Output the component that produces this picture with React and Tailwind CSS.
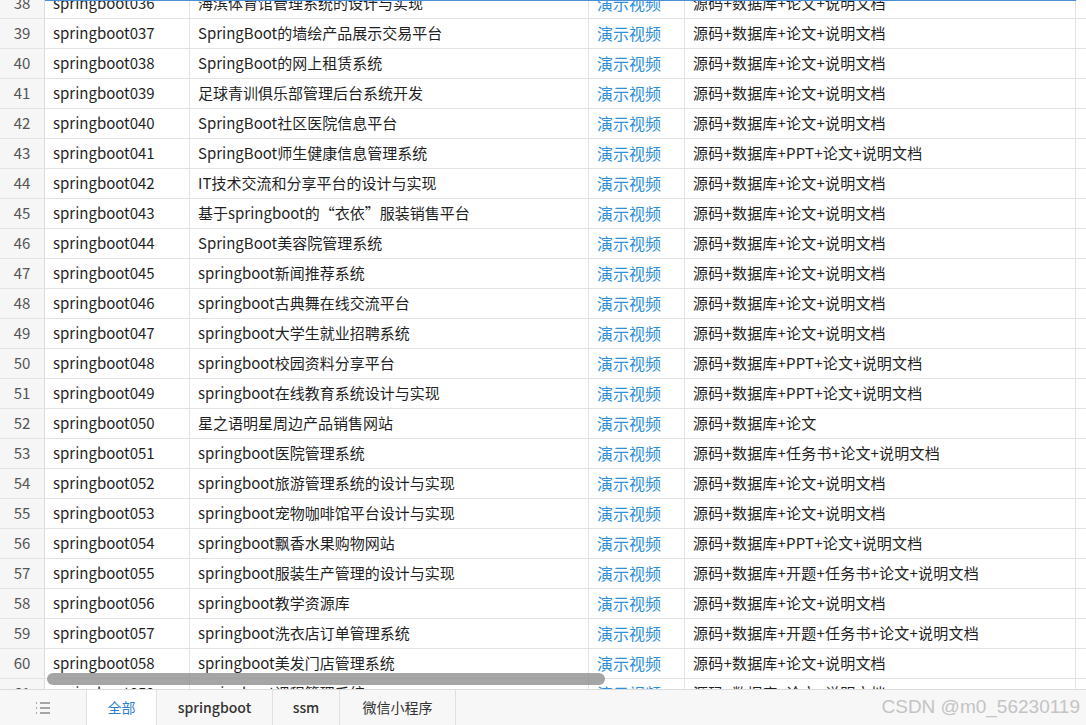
const rows = [
  [38, "springboot036", "海滨体育馆管理系统的设计与实现", "源码+数据库+论文+说明文档"],
  [39, "springboot037", "SpringBoot的墙绘产品展示交易平台", "源码+数据库+论文+说明文档"],
  [40, "springboot038", "SpringBoot的网上租赁系统", "源码+数据库+论文+说明文档"],
  [41, "springboot039", "足球青训俱乐部管理后台系统开发", "源码+数据库+论文+说明文档"],
  [42, "springboot040", "SpringBoot社区医院信息平台", "源码+数据库+论文+说明文档"],
  [43, "springboot041", "SpringBoot师生健康信息管理系统", "源码+数据库+PPT+论文+说明文档"],
  [44, "springboot042", "IT技术交流和分享平台的设计与实现", "源码+数据库+论文+说明文档"],
  [45, "springboot043", "基于springboot的“衣依”服装销售平台", "源码+数据库+论文+说明文档"],
  [46, "springboot044", "SpringBoot美容院管理系统", "源码+数据库+论文+说明文档"],
  [47, "springboot045", "springboot新闻推荐系统", "源码+数据库+论文+说明文档"],
  [48, "springboot046", "springboot古典舞在线交流平台", "源码+数据库+论文+说明文档"],
  [49, "springboot047", "springboot大学生就业招聘系统", "源码+数据库+论文+说明文档"],
  [50, "springboot048", "springboot校园资料分享平台", "源码+数据库+PPT+论文+说明文档"],
  [51, "springboot049", "springboot在线教育系统设计与实现", "源码+数据库+PPT+论文+说明文档"],
  [52, "springboot050", "星之语明星周边产品销售网站", "源码+数据库+论文"],
  [53, "springboot051", "springboot医院管理系统", "源码+数据库+任务书+论文+说明文档"],
  [54, "springboot052", "springboot旅游管理系统的设计与实现", "源码+数据库+论文+说明文档"],
  [55, "springboot053", "springboot宠物咖啡馆平台设计与实现", "源码+数据库+论文+说明文档"],
  [56, "springboot054", "springboot飘香水果购物网站", "源码+数据库+PPT+论文+说明文档"],
  [57, "springboot055", "springboot服装生产管理的设计与实现", "源码+数据库+开题+任务书+论文+说明文档"],
  [58, "springboot056", "springboot教学资源库", "源码+数据库+论文+说明文档"],
  [59, "springboot057", "springboot洗衣店订单管理系统", "源码+数据库+开题+任务书+论文+说明文档"],
  [60, "springboot058", "springboot美发门店管理系统", "源码+数据库+论文+说明文档"],
  [61, "springboot059", "springboot课程管理系统", "源码+数据库+论文+说明文档"],
];

export default function App() {
  return (
    <div className="w-[1086px] h-[725px] overflow-hidden bg-white text-[15px] text-[#1f1f1f]" style={{ fontFamily: '"Noto Sans CJK SC", "Noto Sans", sans-serif' }}>
      <div className="relative h-[689px] overflow-hidden">
        <div className="-mt-[11px]">
          {rows.map(([n, id, name, files]) => (
            <div key={n} className="flex h-[30px] border-b border-[#e3e3e3]">
              <div className="w-[45px] shrink-0 bg-[#f6f6f6] border-r border-[#dcdcdc] flex items-center justify-center text-[#555]">{n}</div>
              <div className="w-[145px] shrink-0 border-r border-[#e3e3e3] flex items-center px-2">{id}</div>
              <div className="w-[399px] shrink-0 border-r border-[#e3e3e3] flex items-center px-2">{name}</div>
              <div className="w-[96px] shrink-0 border-r border-[#e3e3e3] flex items-center px-2 pb-[2px] text-[16px] text-[#2f8fdc]">演示视频</div>
              <div className="w-[391px] shrink-0 border-r border-[#e3e3e3] flex items-center px-2 tracking-[0.2px]">{files}</div>
            </div>
          ))}
        </div>
        <div className="absolute top-0 left-[45px] right-[10px] h-px bg-[#4a90d9]" />
        <div className="absolute left-[47px] top-[673px] w-[558px] h-[12px] rounded-full bg-[#8f8f8f]/80" />
      </div>
      <div className="flex h-[36px] bg-[#f7f7f7] border-t border-[#dcdcdc] items-center text-[14px]">
        <div className="w-[87px] h-full border-r border-[#e0e0e0] flex items-center justify-center text-[#555]">
          <svg width="16" height="14" viewBox="0 0 16 14" fill="none" stroke="#555" strokeWidth="1.2">
            <path d="M1 2h1M1 7h1M1 12h1M5 2h10M5 7h10M5 12h10" />
          </svg>
        </div>
        <div className="w-[70px] h-full border-r border-[#e0e0e0] bg-white flex items-center justify-center text-[#2f7fd0]">全部</div>
        <div className="w-[116px] h-full border-r border-[#e0e0e0] flex items-center justify-center font-medium text-[#333]">springboot</div>
        <div className="w-[67px] h-full border-r border-[#e0e0e0] flex items-center justify-center font-medium text-[#333]">ssm</div>
        <div className="w-[116px] h-full border-r border-[#e0e0e0] flex items-center justify-center text-[#333]">微信小程序</div>
        <div className="flex-1" />
        <div className="pr-[6px] text-[19px] text-[#c4c4c4]" style={{ fontFamily: '"Liberation Sans", sans-serif' }}>CSDN @m0_56230119</div>
      </div>
    </div>
  );
}
